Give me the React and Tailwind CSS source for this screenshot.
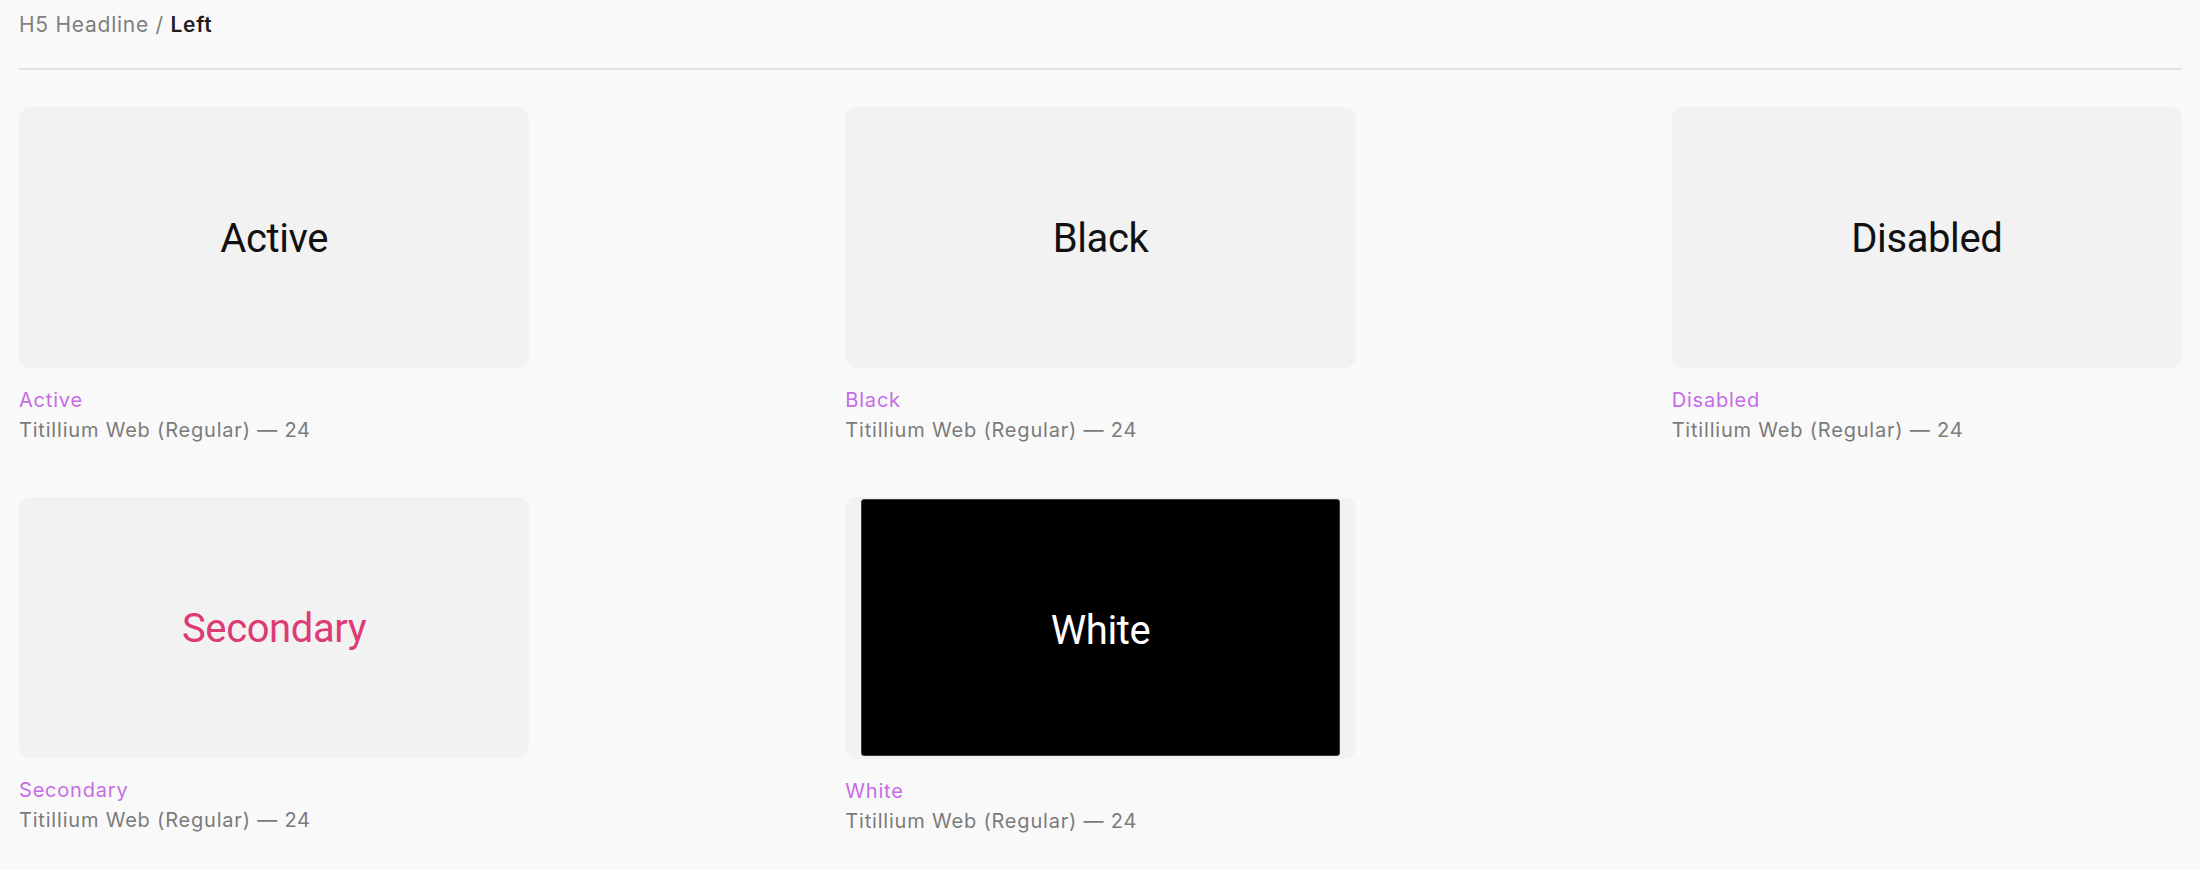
import React from "react";

const items = [
  { name: "Active", preview: "text-[#111111]" },
  { name: "Black", preview: "text-[#111111]" },
  { name: "Disabled", preview: "text-[#111111]" },
  { name: "Secondary", preview: "text-[#dc3b76]" },
  { name: "White", dark: true },
];

function Card({ item }) {
  return (
    <div className="flex flex-col">
      {item.dark ? (
        <div className="h-[262px] rounded-xl bg-[#f2f2f2] px-4 pt-[2px] pb-[3px] flex">
          <div className="flex-1 rounded-[3px] bg-black border border-[#3a3a3a] flex items-center justify-center">
            <span className="font-['Roboto',sans-serif] text-[40px] leading-none text-white pt-[6px] tracking-[-0.01em]">
              {item.name}
            </span>
          </div>
        </div>
      ) : (
        <div className="h-[261px] rounded-xl bg-[#f2f2f2] flex items-center justify-center">
          <span className={`font-['Roboto',sans-serif] text-[40px] leading-none pt-[2px] tracking-[-0.01em] ${item.preview}`}>
            {item.name}
          </span>
        </div>
      )}
      <div className="mt-5 text-[20px] leading-6 tracking-[0.04em] text-[#c56de6]">{item.name}</div>
      <div className="mt-[6px] text-[20px] leading-6 tracking-[0.04em] text-[#7b7b7b]">
        Titillium Web (Regular) — 24
      </div>
    </div>
  );
}

export default function App() {
  return (
    <div className="min-h-screen bg-[#f9f9f9] pl-[19px] pr-[18px] pt-[13px] font-['Inter','Liberation_Sans',sans-serif]">
      <div className="text-[21px] leading-6 tracking-[0.035em] text-[#7f7f7f]">
        H5 Headline / <span className="font-semibold text-[#1d1d1f]">Left</span>
      </div>
      <div className="mt-[31px] h-[2px] bg-[#e3e3e3]" />
      <div className="mt-[37px] grid grid-cols-3 gap-x-[316px] gap-y-[55px]">
        {items.map((it) => (
          <Card key={it.name} item={it} />
        ))}
      </div>
    </div>
  );
}
